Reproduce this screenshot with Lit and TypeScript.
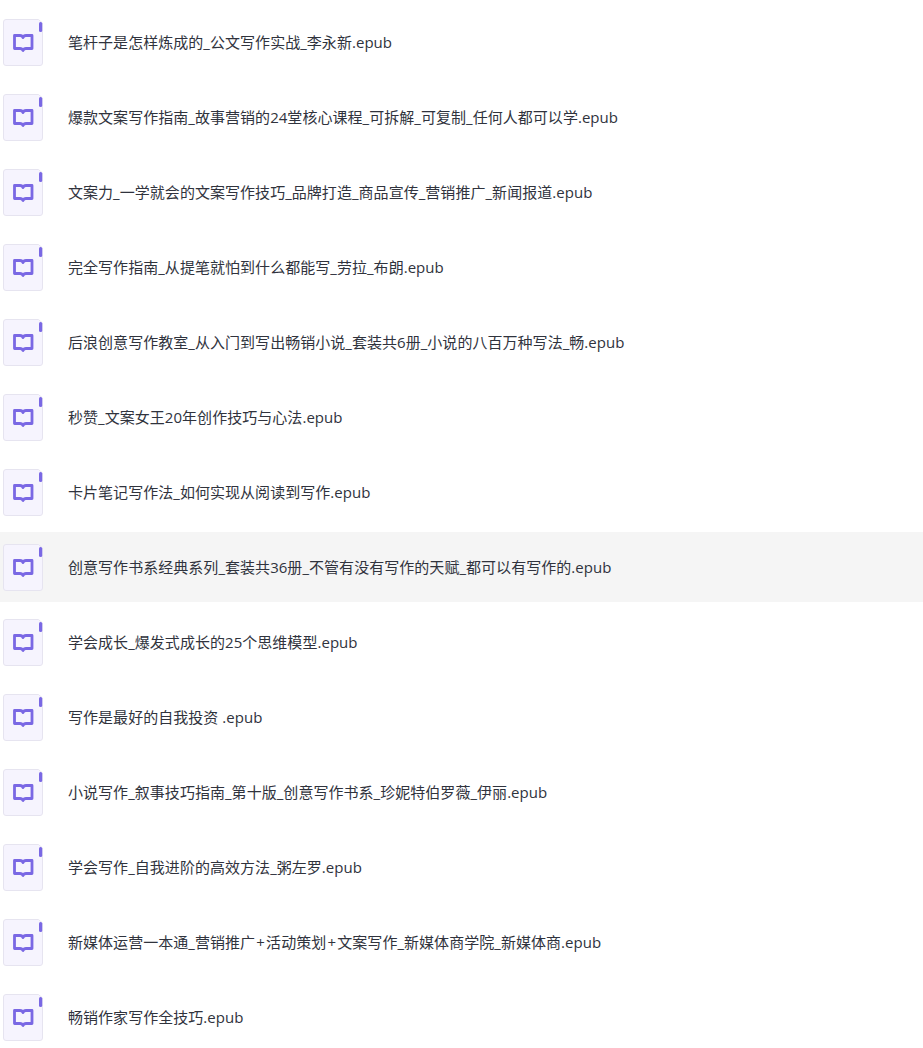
import { LitElement, html, css, svg } from "lit";
import { customElement } from "lit/decorators.js";

const FILES = [
  "笔杆子是怎样炼成的_公文写作实战_李永新.epub",
  "爆款文案写作指南_故事营销的24堂核心课程_可拆解_可复制_任何人都可以学.epub",
  "文案力_一学就会的文案写作技巧_品牌打造_商品宣传_营销推广_新闻报道.epub",
  "完全写作指南_从提笔就怕到什么都能写_劳拉_布朗.epub",
  "后浪创意写作教室_从入门到写出畅销小说_套装共6册_小说的八百万种写法_畅.epub",
  "秒赞_文案女王20年创作技巧与心法.epub",
  "卡片笔记写作法_如何实现从阅读到写作.epub",
  "创意写作书系经典系列_套装共36册_不管有没有写作的天赋_都可以有写作的.epub",
  "学会成长_爆发式成长的25个思维模型.epub",
  "写作是最好的自我投资 .epub",
  "小说写作_叙事技巧指南_第十版_创意写作书系_珍妮特伯罗薇_伊丽.epub",
  "学会写作_自我进阶的高效方法_粥左罗.epub",
  "新媒体运营一本通_营销推广+活动策划+文案写作_新媒体商学院_新媒体商.epub",
  "畅销作家写作全技巧.epub",
];

const icon = svg`<svg class="icon" viewBox="0 0 40 47" width="40" height="47" aria-hidden="true">
  <path d="M3 .5H35.5L39.5 4V44A2.5 2.5 0 0 1 37 46.5H3A2.5 2.5 0 0 1 .5 44V3A2.5 2.5 0 0 1 3 .5Z" fill="#f6f4fe" stroke="#e6e4f0"/>
  <rect x="36" y="3" width="3.2" height="10" rx="1.5" fill="#7a68e4"/>
  <path d="M11.5 16.5H17C18.6 16.5 19.6 17.3 20 18.6C20.4 17.3 21.4 16.5 23 16.5H29V29.5H23C21.6 29.5 20.6 30 20 31.5C19.4 30 18.4 29.5 17 29.5H11.5Z" fill="none" stroke="#7a68e4" stroke-width="2.8" stroke-linejoin="round"/>
</svg>`;

const nameParts = (name: string) =>
  name.split("+").map((part, i) =>
    i === 0 ? part : html`<span class="plus">+</span>${part}`
  );

@customElement("app-root")
export class AppRoot extends LitElement {
  static styles = css`
    :host {
      display: block;
      height: 1048px;
      overflow: hidden;
      background: #fff;
      font-family: "Open Sans", "Noto Sans CJK SC", sans-serif;
    }
    .list {
      display: flex;
      flex-direction: column;
      gap: 5px;
      padding-top: 7px;
    }
    .row {
      display: flex;
      align-items: center;
      gap: 25px;
      height: 70px;
      padding-left: 3px;
      box-sizing: border-box;
    }
    .row.active {
      background: #f5f5f5;
    }
    .icon {
      flex: none;
    }
    .name {
      font-size: 15px;
      line-height: 20px;
      letter-spacing: 0.04px;
      color: #30333d;
      white-space: nowrap;
    }
    .plus {
      margin: 0 1.2px;
    }
  `;

  render() {
    return html`<div class="list">
      ${FILES.map(
        (f, i) => html`<div class="row ${i === 7 ? "active" : ""}">
          ${icon}<span class="name">${nameParts(f)}</span>
        </div>`
      )}
    </div>`;
  }
}
